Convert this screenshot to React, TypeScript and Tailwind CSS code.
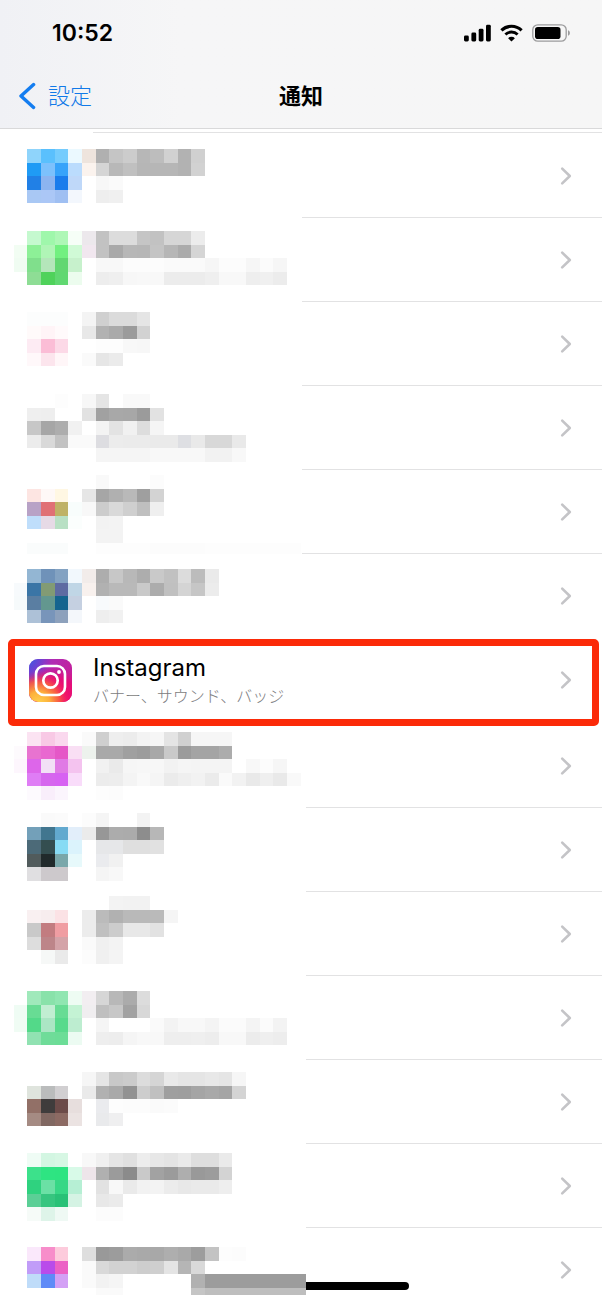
import clsx from "clsx";

// Size of one mosaic tile
const TILE_W = 13.67;
const TILE_H = 13.56;

type Mosaic = {
  top: number;
  // One string per line of tiles, first tile in column 1.
  // "-" leaves a gap, two digits are a grey, six digits a colour.
  rows: string[];
};

const before: Mosaic[] = [
  {
    top: 15,
    rows: [
      "- 8fd4fb 5ac0fd 75ccfd ebf9ff eee4dd b0 c5 cc b7 bd d1 b2 d0",
      "- 1f9bf5 7dc1fc 37a3fa bbdcfd fbf3ee d5 b8 c0 b6 b6 b6 b2 d2",
      "- 2180e6 8cb4f0 1a7cec bfd8f9 - f7 fa",
      "- a9c8f4 abc7f6 9fbff2 f3f7fd - ee f0",
    ],
  },
  {
    top: 13,
    rows: [
      "- c5f9cf 9ff7ab aef7b6 f6fef7 ece8ec c2 dc dc c5 c2 d6 d6 ec",
      "f2fdf3 8df097 b0f5b6 72f080 d0fad6 f1e7ef c2 a9 b7 b6 c4 b6 ab d5",
      "f0fcf2 80df8c b4e6ba 62d771 c7f1cc - f8 f8 fc fc fc fa fa fa f6 fc fc f6 fb f6",
      "- 8edd95 4fd25b 60d871 ecfcee - ed ef f7 f8 f8 ec ec ec ef f8 f8 ee f0 ec",
    ],
  },
  {
    top: 10,
    rows: [
      "- fcfdfd fcfdfd fcfdfd - f4 d0 db db e5",
      "- fffafa fff4f7 fffafb - e8 b2 aa 9b d2",
      "- fdebf3 fbbdd6 fcd9e7 - - fd fd f8 f7",
      "- fff8fa fce5ed fff6f8 - fa e6 eb",
    ],
  },
  {
    top: 8,
    rows: [
      "- - - fd - f7 e5 - f9 f9",
      "- ef ee - - e2 a1 a8 a7 9b e2",
      "- c7 a6 ad f1 - f3 e3 f1 dd f5",
      "- ec d9 c2 fa fa dddde1 ec eb eb ea ea dedfe3 e9 d8 d8 e9",
      "- - - - - - f5 f5 f5 f5 f8 f8 f8 f8 f2 f2 f8",
    ],
  },
  {
    top: 5,
    rows: [
      "- - - - - - f9 - - - fc",
      "- fde5e2 fef8f7 fff7e3 - e6 a6 b0 b9 9f d3",
      "- b8a2c6 e07075 bfb266 f8fdfc f8 cc d9 cf bf ef",
      "- bfdefb e6dae6 b8e0c4 fbfefd - f2 f3",
      "- - - - - - f3 f3",
      "- fafcfc fafcfc fafcfc - - fd fd fd fd fc fc fc fc fd fd fd fd fd fd fd",
    ],
  },
  {
    top: 15,
    rows: [
      "- 93b6d3 6f92b9 83a2c2 f2f8fd f2ecea ad c7 b8 ad c9 c1 dc bc ea",
      "f7fafc 3a75a6 829b74 5e6ba2 c0d6e6 f8f1ee b1 b9 b9 c9 ac c0 d4 c6 ec",
      "f6fafb 5a7ea2 63978f 15648f c5d0e1 - f8fafc fa",
      "- adc1d7 7895ba 8da1bc f4f7fb - ee f1",
    ],
  },
];

const after: Mosaic[] = [
  {
    top: 8,
    rows: [
      "- fbe3f2 f8c9e5 fad8ee - fa cf ee ec f3 f6 e4 d0 f6 f6 f6",
      "fdfafd e873d0 e968d0 e557c7 f9dff4 edf2ed a9 a9 a0 9c a8 c9 9b a4 a4 ac",
      "fdf6fd dd66ea f2e0f6 e07ae5 f4c3ef - f1 ea f6 f7 f7 f2 f5 f4 f4 f4 - f8 fc f6",
      "- df7df5 d666ee d762f2 f9dcfa - ec ed f4 f9 f5 eb ef f2 eb fa f2 e9 ef e9 f9",
      "- fdfafe f9eefb fbf5fd - - fd fc",
    ],
  },
  {
    top: 5,
    rows: [
      "- - fa fb - fc f5 - - f3",
      "- 73a0b9 41768f 62a9cf e2eefa eb 97 ac ab 8d b7",
      "- 4c6a78 344e50 87dbf4 dbf3fc - e6e7e9 e6e7e9 df df e1",
      "- 515b5c 212a2b 79a7aa e7f9fb - eaebee f1",
      "- e0dfe1 cdc9cc cdc9cc - - f5 f8",
    ],
  },
  {
    top: 4,
    rows: [
      "- - - - - - - f3 f2 f2",
      "- f9f0f1 f7edee fbe2e5 - ec bb b1 b9 b9 ba f5",
      "- c9 c27c80 f09da2 - ec c0 cc e8 e8 e2",
      "- dd bd8589 d4a3a8 - fa f0 f3",
      "- - f6f8f7 ea - fc f0 f4",
    ],
  },
  {
    top: 15,
    rows: [
      "- a0e9bb 89e2aa 90e6b1 eefcf3 f2eef1 d6 b8 ab dc",
      "effcf4 68dc94 c1eed2 68dc94 c4f3d4 f0eef0 bf c7 a2 d8",
      "f0fcf4 53d989 abe6c4 58da8c bdedd0 - f5 - - - fa f3 f8 f8 f4 fb fb f4 fb f3",
      "- 91e2b2 6fdc99 6cdd97 ecfbf2 - ee ed f5 f8 f8 ee ee ef ed f8 f8 ec ef ed",
    ],
  },
  {
    top: 12,
    rows: [
      "- - - - - f6 e5 c8 cb dc d5 e9 e5 e5 e8 e5 f6",
      "- dfe4dd babcbc d1cfd1 - ea b1 a9 92 cd c0 9f 9e a5 a9 a5 d4",
      "- 927067 3f3c3c 6c4b49 e7dedd - eaebee fd fc fc fa fb",
      "- a58b83 816862 8c6a63 ebe3e2 - e9eaec efeff0",
    ],
  },
  {
    top: 9,
    rows: [
      "- effcf5 d3f6e2 d7f7e4 - f8 f0 e5 e0 ed e7 e4 ea de de ea",
      "- 3ce18b 2ee482 2de481 d8fae8 eee5ea b0 9b 8b c9 a2 9b ae 99 9c d3",
      "- 2fd27f 6be0a5 37d786 b6efd4 - e2 f8 ea f2 f3 ec e8 ea ea ee",
      "- 5bcf96 36c57f 29c177 d5f3e4 - e8 eb",
      "- f6fbf8 def4e9 eff9f4 - - fc fc",
    ],
  },
  {
    top: 19,
    rows: [
      "- fae8fb f78dca fdcbdc - de 99 9c ab a9 a8 ae a9 9d c3 fd fc",
      "- c19cf8 b94cea ec61c5 - fa d9 d2 d2 cd cf e4 b5 d9",
      "- bfdcf9 5f8bf7 d3a0f5 - fa f2 f5 - - - - - b1 9c 9c 9c 9c 9c 9c 9c 9c",
      "- - - - - - fa fa - - - - - c5 be be be be be be be be",
    ],
  },
];

function toColor(code: string) {
  return code.length === 2 ? `#${code}${code}${code}` : `#${code}`;
}

function Tiles({ mosaic, last, wide }: { mosaic: Mosaic; last?: boolean; wide?: boolean }) {
  return (
    <svg
      className={clsx("block h-[84px] shrink-0", wide ? "w-[306px]" : "w-[302px]")}
      shapeRendering="crispEdges"
      aria-hidden="true"
    >
      {mosaic.rows.map((row, r) =>
        row.split(" ").map((code, c) =>
          code === "-" ? null : (
            <rect
              key={`${r}-${c}`}
              x={(c + 1) * TILE_W}
              y={mosaic.top + r * TILE_H}
              width={TILE_W}
              height={last && r === 3 ? 7 : TILE_H}
              fill={toColor(code)}
            />
          ),
        ),
      )}
    </svg>
  );
}

function Chevron() {
  return (
    <svg className="h-5 w-3 shrink-0" viewBox="0 0 12 20" fill="none" aria-hidden="true">
      <path d="M2.2 2.6 9.8 10l-7.600 7.400" stroke="#c4c4c7" strokeWidth="2.6" strokeLinecap="round" strokeLinejoin="round" />
    </svg>
  );
}

type RowProps = { mosaic: Mosaic; last?: boolean; wide?: boolean; divider?: boolean };

function MosaicRow({ mosaic, last, wide, divider = true }: RowProps) {
  return (
    <li>
      <a href="#app" aria-label="通知" className="flex h-[84px]">
        <Tiles mosaic={mosaic} last={last} wide={wide} />
        <span
          className={clsx(
            "flex flex-1 items-center justify-end pr-[30px]",
            divider && "border-b border-[#e2e2e3]",
          )}
        >
          <Chevron />
        </span>
      </a>
    </li>
  );
}

function InstagramIcon() {
  return (
    <svg className="size-[43px] shrink-0" viewBox="0 0 43 43" fill="none" aria-hidden="true">
      <defs>
        <linearGradient id="ig-base" x1="0" y1="0" x2="1" y2="0.35">
          <stop offset="0" stopColor="#6a3fd8" />
          <stop offset="0.5" stopColor="#b02bb4" />
          <stop offset="1" stopColor="#c4209c" />
        </linearGradient>
        <radialGradient id="ig-pink" cx="0.6" cy="1" r="0.85">
          <stop offset="0.3" stopColor="#f2106a" />
          <stop offset="0.65" stopColor="#ea0a72" stopOpacity="0.85" />
          <stop offset="1" stopColor="#d4138a" stopOpacity="0" />
        </radialGradient>
        <radialGradient id="ig-warm" cx="0.22" cy="1.02" r="0.75">
          <stop offset="0" stopColor="#ffd24e" />
          <stop offset="0.35" stopColor="#fdb03c" />
          <stop offset="0.65" stopColor="#f9633f" stopOpacity="0.85" />
          <stop offset="1" stopColor="#f2106a" stopOpacity="0" />
        </radialGradient>
        <radialGradient id="ig-blue" cx="0" cy="0" r="0.5">
          <stop offset="0" stopColor="#3b5be0" />
          <stop offset="1" stopColor="#6a3fd8" stopOpacity="0" />
        </radialGradient>
      </defs>
      <rect width="43" height="43" rx="9" fill="url(#ig-base)" />
      <rect width="43" height="43" rx="9" fill="url(#ig-pink)" />
      <rect width="43" height="43" rx="9" fill="url(#ig-warm)" />
      <rect width="43" height="43" rx="9" fill="url(#ig-blue)" />
      <rect x="7" y="7" width="29" height="29" rx="8" stroke="#fff" strokeWidth="2.6" />
      <circle cx="21.5" cy="21.5" r="7.2" stroke="#fff" strokeWidth="2.7" />
      <circle cx="30" cy="13" r="1.9" fill="#fff" />
    </svg>
  );
}

function StatusIcons() {
  return (
    <div className="flex items-center gap-2">
      <svg className="h-[18px] w-7" viewBox="0 0 28 18" aria-hidden="true">
        <rect x="0" y="11.5" width="4.8" height="6" rx="1.4" />
        <rect x="7.4" y="8.5" width="4.8" height="9" rx="1.4" />
        <rect x="14.7" y="4.8" width="4.8" height="12.7" rx="1.4" />
        <rect x="22" y="0.8" width="4.8" height="16.7" rx="1.4" />
      </svg>
      <svg className="h-[18px] w-6" viewBox="0 0 24 18" fill="none" stroke="#000" aria-hidden="true">
        <path d="M1.4 6.4a14.4 14.4 0 0 1 20.2 0" strokeWidth="3.1" />
        <path d="M5.4 10.5a8.7 8.7 0 0 1 12.2 0" strokeWidth="2.9" />
        <path d="M11.5 17.6 8.1 14.2a4.8 4.8 0 0 1 6.8 0Z" fill="#000" stroke="none" />
      </svg>
      <svg className="h-[18px] w-[39px]" viewBox="0 0 39 18" fill="none" aria-hidden="true">
        <rect x="0.8" y="0.8" width="33.4" height="16.4" rx="5" stroke="#9c9c9d" strokeWidth="1.3" />
        <rect x="3" y="3" width="25.5" height="12" rx="2.8" fill="#000" />
        <path d="M36 6.2c1.2.4 1.9 1.5 1.9 2.8s-.7 2.4-1.9 2.8Z" fill="#9c9c9d" />
      </svg>
    </div>
  );
}

export default function App() {
  return (
    <main className="relative flex h-screen flex-col overflow-hidden bg-white font-['Inter','Noto_Sans_CJK_JP',sans-serif] text-black">
      <header className="shrink-0 border-b border-[#d9d9da] bg-[#f6f6f6] bg-linear-to-r from-[#f0f1f5] via-[#f6f6f7] via-30% to-[#f6f6f6]">
        {/* Status bar */}
        <div className="flex h-16 items-center justify-between pt-0.5 pr-[31px] pl-[52px]">
          <span className="text-[23px] font-semibold">10:52</span>
          <StatusIcons />
        </div>
        {/* Navigation bar */}
        <nav className="grid h-16 grid-cols-3 items-center px-[18px] text-[22px]">
          <a href="#settings" className="flex items-center gap-3 font-light text-[#1079e8]">
            <svg className="h-7 w-[18px]" viewBox="0 0 18 28" fill="none" aria-hidden="true">
              <path d="M15.600 2.600 3 14l12.600 11.400" stroke="#147df0" strokeWidth="3.400" strokeLinecap="round" strokeLinejoin="round" />
            </svg>
            設定
          </a>
          <h1 className="text-center font-bold">通知</h1>
        </nav>
      </header>

      {/* Home indicator */}
      <div className="absolute bottom-3 left-1/2 h-2 w-[216px] -translate-x-1/2 rounded-full bg-black" />

      <div className="relative min-h-0 flex-1 overflow-hidden">
        <div className="ml-[93px] h-1 border-b border-[#e2e2e3]" />
        <ul className="pt-px">
          {before.map((mosaic, i) => (
            <MosaicRow key={i} mosaic={mosaic} divider={i < before.length - 1} />
          ))}
          <li className="relative">
            <a href="#instagram" className="flex h-[86px] items-center pr-[30px] pb-0.5 pl-[29px]">
              <InstagramIcon />
              <span className="ml-[21px] flex flex-1 flex-col">
                <span className="text-2xl leading-8">Instagram</span>
                <span className="text-base leading-6 font-light text-[#7c7c80]">バナー、サウンド、バッジ</span>
              </span>
              <Chevron />
            </a>
            <div className="pointer-events-none absolute top-px right-[3px] -bottom-0.5 left-2 z-10 rounded-[5px] border-[7px] border-[#fb2a08]" />
          </li>
          {after.map((mosaic, i) => (
            <MosaicRow key={i} mosaic={mosaic} last={i === after.length - 1} divider={i < after.length - 1} wide />
          ))}
        </ul>
      </div>
    </main>
  );
}
